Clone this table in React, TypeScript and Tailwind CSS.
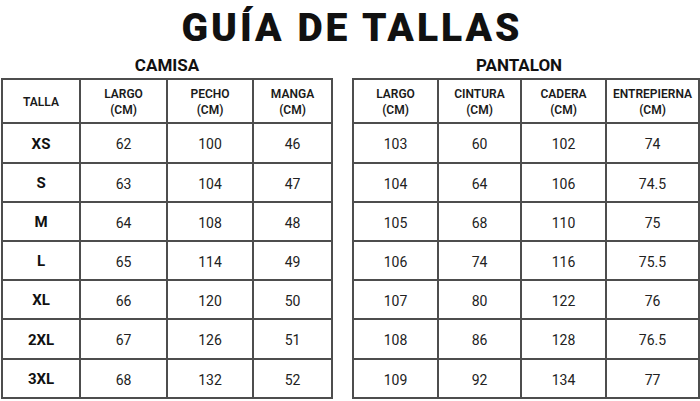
import React from 'react';

// Guía de tallas: two measurement tables side by side

const camisaHead = ['TALLA', 'LARGO\n(CM)', 'PECHO\n(CM)', 'MANGA\n(CM)'];
const camisaRows = [
    ['XS', '62', '100', '46'],
    ['S', '63', '104', '47'],
    ['M', '64', '108', '48'],
    ['L', '65', '114', '49'],
    ['XL', '66', '120', '50'],
    ['2XL', '67', '126', '51'],
    ['3XL', '68', '132', '52'],
];

const pantalonHead = ['LARGO\n(CM)', 'CINTURA\n(CM)', 'CADERA\n(CM)', 'ENTREPIERNA\n(CM)'];
const pantalonRows = [
    ['103', '60', '102', '74'],
    ['104', '64', '106', '74.5'],
    ['105', '68', '110', '75'],
    ['106', '74', '116', '75.5'],
    ['107', '80', '122', '76'],
    ['108', '86', '128', '76.5'],
    ['109', '92', '134', '77'],
];

const cell = 'flex items-center justify-center text-center border-r-2 border-b-2 border-[#4d4d4d]';

function SizeTable({ cols, head, rows, boldFirst }: { cols: string; head: string[]; rows: string[][]; boldFirst?: boolean }) {
    return (
        <div className={`grid ${cols} grid-rows-[44px_40px_39px_39px_39px_39px_40px_39px] border-l-2 border-t-2 border-[#4d4d4d]`}>
            {head.map((h, i) => (
                <div key={'h' + i} className={`${cell} pt-[1px] text-[12px] leading-[16px] font-semibold text-[#1a1a1a] whitespace-pre-line`}>
                    {h}
                </div>
            ))}
            {rows.map((r, ri) =>
                r.map((v, ci) => (
                    <div
                        key={ri + '-' + ci}
                        className={`${cell} pt-[2px] leading-none ${boldFirst && ci === 0 ? 'text-[15px] font-bold text-[#111]' : 'text-[14px] text-[#222]'}`}
                    >
                        {v}
                    </div>
                ))
            )}
        </div>
    );
}

export default function App() {
    return (
        <div className="w-[700px] h-[401px] bg-white overflow-hidden font-['Roboto','Liberation_Sans',sans-serif]">
            <h1 className="h-[48px] pt-[8px] pl-[4px] text-center text-[39px] leading-[40px] font-black tracking-[3px] text-[#111]">
                GUÍA DE TALLAS
            </h1>
            <div className="flex">
                <section className="ml-[1px] w-[332px]">
                    <h2 className="h-[30px] pt-[7px] text-center text-[17px] leading-[20px] font-bold text-[#111]">CAMISA</h2>
                    <SizeTable cols="grid-cols-[78px_87px_86px_79px]" head={camisaHead} rows={camisaRows} boldFirst />
                </section>
                <section className="ml-[19px] w-[348px]">
                    <h2 className="h-[30px] pt-[7px] pr-[14px] text-center text-[17px] leading-[20px] font-bold text-[#111]">PANTALON</h2>
                    <SizeTable cols="grid-cols-[85px_83px_85px_93px]" head={pantalonHead} rows={pantalonRows} />
                </section>
            </div>
        </div>
    );
}
